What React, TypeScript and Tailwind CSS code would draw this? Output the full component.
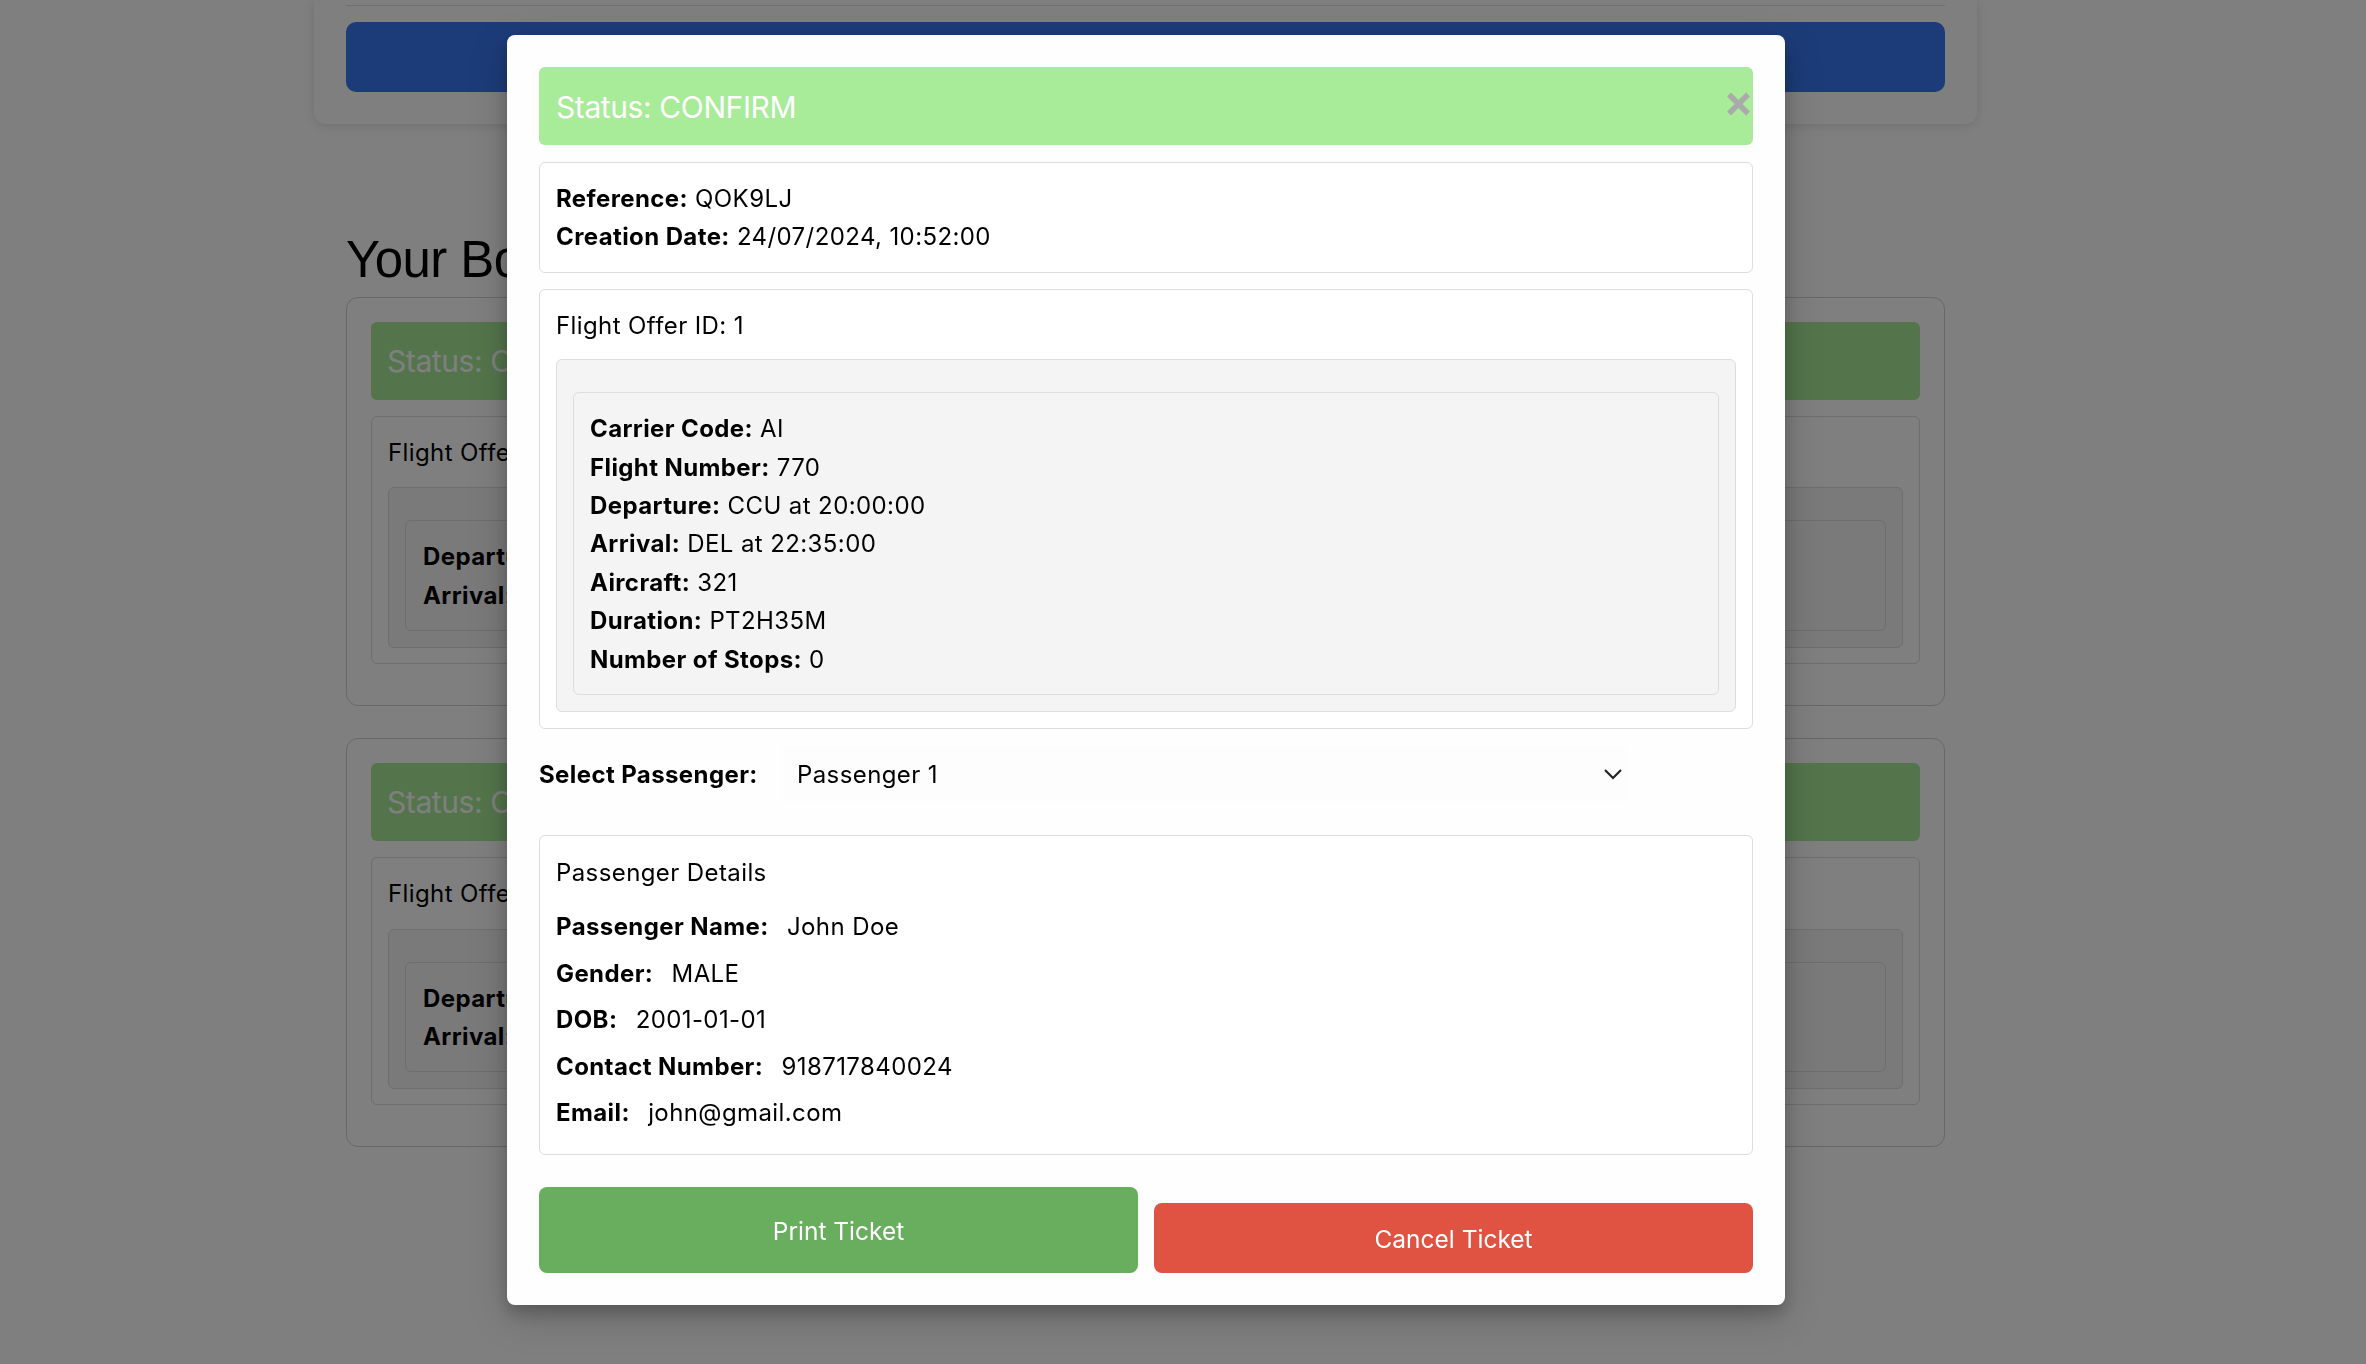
import React from "react";

const BgBooking = () => (
  <div className="mx-[32px] mb-[32px] rounded-[12px] border border-[#d0d0d0] bg-white px-[24px] pt-[24px] pb-[41px]">
    <div className="flex h-[78px] items-center rounded-[6px] bg-[#a8eb99] px-[16px] text-[30px] tracking-[-0.4px] text-white">
      Status: CONFIRM
    </div>
    <div className="mt-[16px] rounded-[6px] border border-[#dddddd] px-[16px] pt-[17px] pb-[15px] tracking-[0.4px]">
      <div className="text-[24px] leading-[38.4px]">Flight Offer ID: 1</div>
      <div className="mt-[15px] rounded-[6px] border border-[#dddddd] bg-[#f4f4f4] px-[16px] pt-[32px] pb-[16px]">
        <div className="rounded-[6px] border border-[#dddddd] bg-[#f4f4f4] px-[17px] pt-[17px] pb-[15px] text-[24px] leading-[38.4px]">
          <div>
            <b>Departure:</b> CCU at 20:00:00
          </div>
          <div>
            <b>Arrival:</b> DEL at 22:35:00
          </div>
        </div>
      </div>
    </div>
  </div>
);

const Row = ({ label, value }: { label: string; value: string }) => (
  <div className="mb-[8px] leading-[38.4px]">
    <b className="mr-[4px]">{label}</b>&nbsp;&nbsp;{value}
  </div>
);

export default function App() {
  return (
    <div className="relative h-screen w-full overflow-hidden bg-white font-['Inter',sans-serif] text-black">
      {/* background page */}
      <div className="ml-[314px] w-[1663px]">
        <div className="h-[124px] rounded-b-[12px] bg-white px-[32px] shadow-[0_2px_12px_rgba(0,0,0,0.12)]">
          <div className="h-[5px]" />
          <div className="h-px bg-[#e2e2e2]" />
          <div className="mt-[16px] h-[70px] rounded-[10px] bg-[#3878f3]" />
        </div>
        <h1 className="mx-[32px] mt-[106px] mb-[7px] font-['Liberation_Sans',Arial,sans-serif] text-[51px] leading-[60px] tracking-[-0.6px]">
          Your Bookings
        </h1>
        <BgBooking />
        <BgBooking />
      </div>

      {/* overlay */}
      <div className="fixed inset-0 bg-[rgba(0,0,0,0.5)]" />

      {/* modal */}
      <div className="absolute left-[507px] top-[35px] w-[1278px] rounded-[8px] bg-[#fefefe] p-[32px] text-[24px] tracking-[0.4px] shadow-[0_8px_16px_rgba(0,0,0,0.2),0_12px_40px_rgba(0,0,0,0.19)]">
        <div className="relative flex h-[78px] items-center rounded-[6px] bg-[#a8eb99] px-[17px] pt-[2px] text-[30px] tracking-[-0.4px] text-white">
          Status: CONFIRM
          <svg
            className="absolute right-[2px] top-[25px]"
            width="25"
            height="24"
            viewBox="0 0 25 24"
          >
            <path d="M3 2.5 L22 21.5 M22 2.5 L3 21.5" stroke="#aaaaaa" strokeWidth="5.5" />
          </svg>
        </div>

        <div className="mt-[17px] rounded-[6px] border border-[#dddddd] bg-white px-[16px] pt-[17px] pb-[15px] leading-[38.4px]">
          <div>
            <b>Reference:</b> QOK9LJ
          </div>
          <div>
            <b>Creation Date:</b> 24/07/2024, 10:52:00
          </div>
        </div>

        <div className="mt-[16px] rounded-[6px] border border-[#dddddd] bg-white px-[16px] pt-[17px] pb-[16px]">
          <div className="leading-[38.4px]">Flight Offer ID: 1</div>
          <div className="mt-[14px] rounded-[6px] border border-[#dddddd] bg-[#f4f4f4] px-[16px] pt-[32px] pb-[16px]">
            <div className="rounded-[6px] border border-[#dddddd] bg-[#f4f4f4] px-[16px] pt-[17px] pb-[15px] leading-[38.4px]">
              <div>
                <b>Carrier Code:</b> AI
              </div>
              <div>
                <b>Flight Number:</b> 770
              </div>
              <div>
                <b>Departure:</b> CCU at 20:00:00
              </div>
              <div>
                <b>Arrival:</b> DEL at 22:35:00
              </div>
              <div>
                <b>Aircraft:</b> 321
              </div>
              <div>
                <b>Duration:</b> PT2H35M
              </div>
              <div>
                <b>Number of Stops:</b> 0
              </div>
            </div>
          </div>
        </div>

        <div className="mt-[16px] mb-[33px] flex h-[57px] items-center pt-[2px]">
          <div className="w-[242px] font-bold">Select Passenger:</div>
          <div className="flex h-[55px] w-[847px] items-center justify-between bg-[#fdfdfd] pl-[16px] pr-[6px]">
            <span>Passenger 1</span>
            <svg width="18" height="11" viewBox="0 0 18 11">
              <polyline points="1,1 9,9 17,1" fill="none" stroke="#222222" strokeWidth="2.2" />
            </svg>
          </div>
        </div>

        <div className="rounded-[6px] border border-[#dddddd] bg-white px-[16px] pt-[18px] pb-[13px]">
          <div className="mb-[16px] leading-[38.4px]">Passenger Details</div>
          <Row label="Passenger Name:" value="John Doe" />
          <Row label="Gender:" value="MALE" />
          <Row label="DOB:" value="2001-01-01" />
          <Row label="Contact Number:" value="918717840024" />
          <Row label="Email:" value="john@gmail.com" />
        </div>

        <div className="mt-[32px] flex items-end gap-[16px]">
          <button className="h-[86px] flex-1 rounded-[8px] bg-[#69ad5e] pt-[3px] text-[24.5px] tracking-normal text-white">
            Print Ticket
          </button>
          <button className="h-[70px] flex-1 rounded-[8px] bg-[#e05343] pt-[3px] text-[24.5px] tracking-normal text-white">
            Cancel Ticket
          </button>
        </div>
      </div>
    </div>
  );
}
